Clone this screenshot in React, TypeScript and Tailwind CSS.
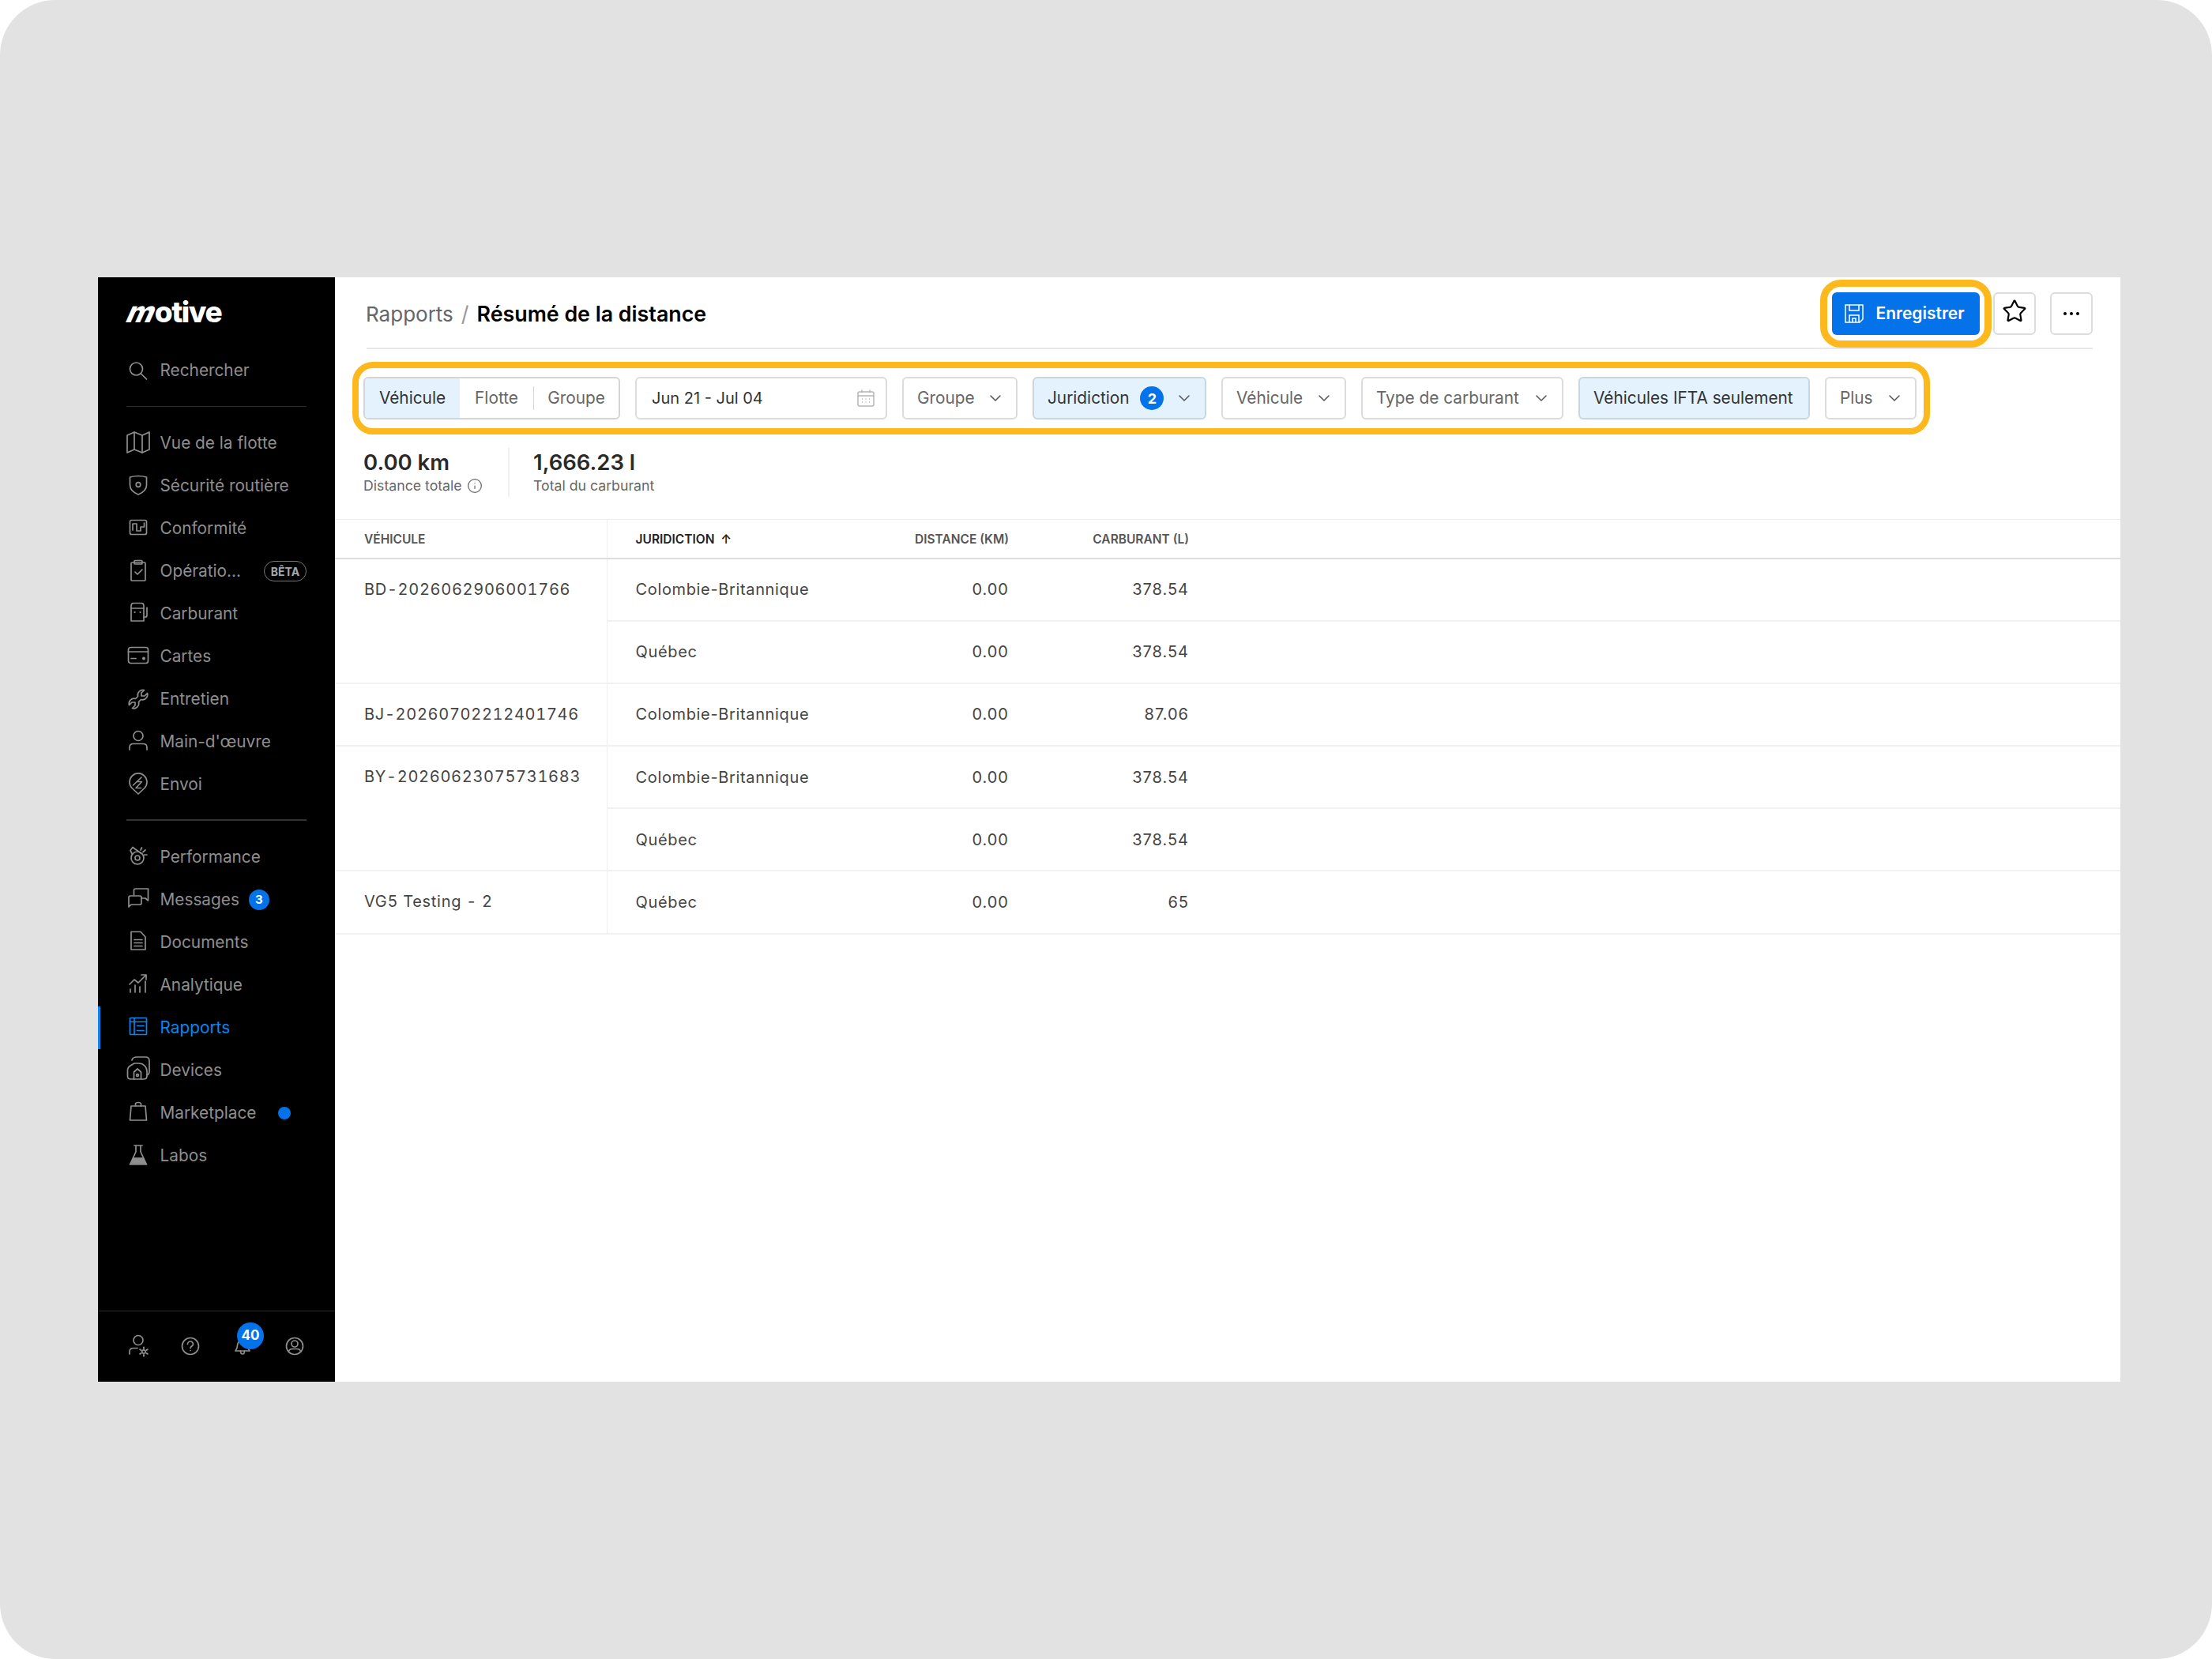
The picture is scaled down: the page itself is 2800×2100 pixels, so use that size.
import { ChevronDown, Info, Star } from 'lucide-react';
import type { ReactNode } from 'react';

function Ic({ children }: { children: ReactNode }) {
  return (
    <svg width="30" height="30" viewBox="0 0 30 30" fill="none" stroke="currentColor" strokeWidth="1.7" strokeLinecap="round" strokeLinejoin="round" className="shrink-0 overflow-visible">
      {children}
    </svg>
  );
}

const icons: Record<string, ReactNode> = {
  search: <><circle cx="12.5" cy="13" r="8" /><path d="M18.5 19 25.5 26" /></>,
  map: <><path d="M1 5 10 1 20 5 29 1V23L20 27 10 23 1 27Z" /><path d="M10 1V23M20 5V27" /></>,
  shield: <><path d="M4.5 4Q15 1 25.5 4V14C25.5 20 20 24 15 26 10 24 4.5 20 4.5 14Z" /><circle cx="15" cy="13.5" r="2.8" /></>,
  compliance: <><rect x="4.5" y="4.5" width="21" height="18" rx="2" /><path d="M8 17V9H13V18H18V13H22.5V8" /></>,
  clipboard: <><rect x="6" y="4" width="18" height="23" rx="1" /><rect x="10" y="1.5" width="10" height="4.5" rx="1" /><path d="M11 16 14 19 20 13" /></>,
  fuel: <><path d="M6 24V5Q6 1.5 9 1.5H19Q22 1.5 22 5V24Z" /><path d="M6 8H22M22 19H24Q26 19 26 17V7" /><path d="M10.5 13H10.6M17.5 13H17.6" strokeWidth="2.2" /></>,
  card: <><rect x="2.5" y="3.5" width="25" height="20" rx="3" /><path d="M2.5 9H27.5M6 17.5H12" /><circle cx="22" cy="17.5" r="2" fill="currentColor" stroke="none" /></>,
  wrench: <path d="M22.5 3.6 19 7V11H23L26.5 7.5A6.5 6.5 0 0 1 18.5 15.5L15.5 18.5A6.5 6.5 0 0 1 7.5 26.5L11 23V19H7L3.5 22.5A6.5 6.5 0 0 1 11.5 14.5L14.5 11.5A6.5 6.5 0 0 1 22.5 3.6Z" />,
  user: <><circle cx="15" cy="7.5" r="6" /><path d="M4 25V22Q4 17.5 9 17.5H21Q26 17.5 26 22V25" /></>,
  pin: <><path d="M15 27 7 19.5A11 11 0 1 1 23 19.5Z" /><path d="M8.5 16 19 6M13 11.5H19.5L12 19.5H18.5" /></>,
  perf: <><circle cx="14" cy="16" r="8" /><circle cx="14" cy="16" r="3" /><path d="M7.5 11.5 5 6.5 8 2.5 19 10.5M18 6 19.5 3M21 8.5 24 6M22.5 12H26" /></>,
  messages: <><path d="M3 24V12Q3 10 5 10H17Q19 10 19 12V19Q19 21 17 21H6Z" /><path d="M9.5 9V3Q9.5 1 11.5 1H27.5V16L24 13H19" /></>,
  docs: <><path d="M6 1.5H18L24 8V24H6Z" /><path d="M10 11.5H20M10 15.5H20M10 19.5H20" /></>,
  analytics: <><path d="M4 14 10 8 15 12 25 2M19 2H25V8M5 20V24M11 15V24M17 17V24M24 10V24" /></>,
  reports: <><rect x="4.5" y="2.5" width="21" height="21" rx="1" /><path d="M4.5 7.5H25.5M10 2.5V23.5M13.5 12.5H22M13.5 18.5H22" /></>,
  devices: <><path d="M7 2Q8 -2 13 -2H24Q29 -2 29 3V16Q29 20 26 21" /><path d="M1.5 22V15Q1.5 11 5 9L10 6H16Q20 6 23 9 26 12 26 16V22Q26 26 22 26H5.5Q1.5 26 1.5 22Z" /><path d="M9.5 26V17L14 13 18.5 17V26" /><circle cx="14" cy="21" r="1.4" /></>,
  market: <><path d="M6 6H24L25.5 24H4.5Z" /><path d="M11.5 6V3.5Q11.5 1.5 15 1.5 18.5 1.5 18.5 3.5V6" /></>,
  lab: <><path d="M10 2H20M12 2V10L4.5 26H25.5L18 10V2" /><path d="M9 18H21L24 25H6Z" fill="currentColor" /></>,
  userCog: <><circle cx="15" cy="7.5" r="6" /><path d="M4 25V22Q4 17.5 9 17.5H14" /><circle cx="22" cy="22" r="2.2" /><path d="M22 16.5V18M22 26V27.5M17.2 19.2 18.5 20M25.5 24 26.8 24.8M17.2 24.8 18.5 24M25.5 20 26.8 19.2" strokeWidth="2" /></>,
  help: <><circle cx="15" cy="15" r="10.5" /><path d="M11.5 12.5A3.5 3.5 0 0 1 18.5 12.5C18.5 15 15 15 15 17.5M15 20.5H15.1" /></>,
  bell: <><path d="M6 21Q8.5 18 8.5 14A6.5 6.5 0 0 1 21.5 14Q21.5 18 24 21Z" /><path d="M12.5 21Q12.5 25 15 25 17.5 25 17.5 21" /></>,
  account: <><circle cx="15" cy="15" r="10.5" /><circle cx="15" cy="12" r="4" /><path d="M7.5 22Q8 18.5 12 18.5H18Q22 18.5 22.5 22" /></>,
};

type NavEntry = { icon: string; label: string; extra?: ReactNode; active?: boolean };

const topNav: NavEntry[] = [
  { icon: 'map', label: 'Vue de la flotte' },
  { icon: 'shield', label: 'Sécurité routière' },
  { icon: 'compliance', label: 'Conformité' },
  {
    icon: 'clipboard',
    label: 'Opératio...',
    extra: (
      <span className="ml-auto mr-[36px] flex h-[26px] w-[54px] items-center justify-center rounded-full border border-[#777777] text-[14px] font-bold text-[#a8a8a8]">
        BÊTA
      </span>
    ),
  },
  { icon: 'fuel', label: 'Carburant' },
  { icon: 'card', label: 'Cartes' },
  { icon: 'wrench', label: 'Entretien' },
  { icon: 'user', label: "Main-d'œuvre" },
  { icon: 'pin', label: 'Envoi' },
];

const bottomNav: NavEntry[] = [
  { icon: 'perf', label: 'Performance' },
  {
    icon: 'messages',
    label: 'Messages',
    extra: (
      <span className="ml-[12px] flex h-[26px] w-[26px] items-center justify-center rounded-full bg-[#0473e9] text-[15px] font-bold text-white">
        3
      </span>
    ),
  },
  { icon: 'docs', label: 'Documents' },
  { icon: 'analytics', label: 'Analytique' },
  { icon: 'reports', label: 'Rapports', active: true },
  { icon: 'devices', label: 'Devices' },
  {
    icon: 'market',
    label: 'Marketplace',
    extra: <span className="ml-auto mr-[56px] h-[16px] w-[16px] rounded-full bg-[#0473e9]" />,
  },
  { icon: 'lab', label: 'Labos' },
];

function NavRow({ icon, label, extra, active }: NavEntry) {
  return (
    <div className={active ? 'flex h-[54px] items-center border-l-[3px] border-[#0a84f0] pl-[33px] text-[#0a84f0]' : 'flex h-[54px] items-center pl-[36px] text-[#8f8f8f]'}>
      <Ic>{icons[icon]}</Ic>
      <span className="ml-[12.5px] text-[20.8px] whitespace-nowrap">{label}</span>
      {extra}
    </div>
  );
}

function Sidebar() {
  return (
    <aside className="flex h-full w-[300px] shrink-0 flex-col bg-black">
      <div className="flex h-[86px] items-center pl-[39px] text-[37px] leading-none font-extrabold tracking-[-1.5px] text-white">
        <span className="inline-block -skew-x-[24deg]">m</span>
        <span>otive</span>
      </div>
      <div className="mt-[5px]">
        <NavRow icon="search" label="Rechercher" />
      </div>
      <div className="mx-[36px] mt-[18px] mb-[19px] h-[1px] bg-[#2a2a2a]" />
      {topNav.map((n) => (
        <NavRow key={n.label} {...n} />
      ))}
      <div className="mx-[36px] mt-[17px] mb-[19px] h-[2px] bg-[#333333]" />
      {bottomNav.map((n) => (
        <NavRow key={n.label} {...n} />
      ))}
      <div className="mt-auto flex h-[90px] items-center gap-[36px] border-t border-[#2a2a2a] pb-[2px] pl-[36px] text-[#8f8f8f]">
        <Ic>{icons.userCog}</Ic>
        <Ic>{icons.help}</Ic>
        <div className="relative h-[30px] w-[30px]">
          <Ic>{icons.bell}</Ic>
          <span className="absolute -top-[15px] left-[8px] flex h-[34px] w-[34px] items-center justify-center rounded-full bg-[#0473e9] text-[17px] font-bold text-white">
            40
          </span>
        </div>
        <Ic>{icons.account}</Ic>
      </div>
    </aside>
  );
}

function Pill({ w, active, children }: { w: string; active?: boolean; children: ReactNode }) {
  return (
    <div className={`flex h-[54px] ${w} shrink-0 items-center justify-between rounded-[6px] border-2 pr-[14px] pl-[17px] text-[20.8px] whitespace-nowrap ${active ? 'border-[#c9d6e2] bg-[#e3f2fd] text-[#333333]' : 'border-[#dcdcdc] bg-white text-[#666666]'}`}>
      {children}
    </div>
  );
}

function Chevron() {
  return <ChevronDown size={24} strokeWidth={1.5} className="shrink-0 text-[#555555]" />;
}

function FilterBar() {
  return (
    <div className="mt-[16px] ml-[22px] flex h-[92px] w-[1997px] items-center gap-[19px] rounded-[26px] border-[8px] border-[#fdb81e] pl-[6px]">
      <div className="flex h-[54px] w-[325px] shrink-0 overflow-hidden rounded-[6px] border-2 border-[#d5d5d5] text-[20.8px] text-[#666666]">
        <div className="flex w-[120px] items-center justify-center bg-[#e3f2fd] text-[#333333]">Véhicule</div>
        <div className="flex w-[93px] items-center justify-center">Flotte</div>
        <div className="my-auto h-[30px] w-[1px] bg-[#d5d5d5]" />
        <div className="flex flex-1 items-center justify-center">Groupe</div>
      </div>
      <Pill w="w-[319px]">
        <span className="pl-[2px] text-[20px] text-[#333333]">Jun 21 - Jul 04</span>
        <svg width="22" height="22" viewBox="0 0 22 22" fill="none" stroke="#b5b5b5" strokeWidth="1.5">
          <rect x="1" y="3" width="20" height="18" rx="2" />
          <path d="M1 8H21M6 0.5V4M16 0.5V4" />
          <path d="M6 12H7M10.5 12H11.5M15 12H16M6 16H7M10.5 16H11.5M15 16H16" />
        </svg>
      </Pill>
      <Pill w="w-[146px]">Groupe<Chevron /></Pill>
      <Pill w="w-[220px]" active>
        <span>Juridiction</span>
        <span className="flex h-[30px] w-[30px] items-center justify-center rounded-full bg-[#0473e9] text-[18px] font-bold text-white">2</span>
        <Chevron />
      </Pill>
      <Pill w="w-[158px]">Véhicule<Chevron /></Pill>
      <Pill w="w-[256px]">Type de carburant<Chevron /></Pill>
      <Pill w="w-[293px]" active>Véhicules IFTA seulement</Pill>
      <Pill w="w-[116px]">Plus<Chevron /></Pill>
    </div>
  );
}

const rows = [
  { vehicle: 'BD-2026062906001766', items: [['Colombie-Britannique', '0.00', '378.54'], ['Québec', '0.00', '378.54']] },
  { vehicle: 'BJ-20260702212401746', items: [['Colombie-Britannique', '0.00', '87.06']] },
  { vehicle: 'BY-20260623075731683', items: [['Colombie-Britannique', '0.00', '378.54'], ['Québec', '0.00', '378.54']] },
  { vehicle: 'VG5 Testing - 2', items: [['Québec', '0.00', '65']] },
];

function DataTable() {
  return (
    <table className="w-full table-fixed border-collapse text-[20px] text-[#444444]">
      <colgroup>
        <col className="w-[344px]" />
        <col className="w-[330px]" />
        <col className="w-[179px]" />
        <col className="w-[228px]" />
        <col />
      </colgroup>
      <thead>
        <tr className="h-[49px] border-t border-b-2 border-t-[#eeeeee] border-b-[#dddddd] text-[15.5px] font-semibold text-[#555555]">
          <th className="border-r border-[#eeeeee] pt-[1px] pl-[37px] text-left font-semibold">VÉHICULE</th>
          <th className="pt-[1px] pl-[36px] text-left font-semibold text-[#222222]">JURIDICTION <span className="ml-[4px]">↑</span></th>
          <th className="pt-[1px] text-right font-semibold">DISTANCE (KM)</th>
          <th className="pt-[1px] text-right font-semibold">CARBURANT (L)</th>
          <th />
        </tr>
      </thead>
      <tbody>
        {rows.map((r) =>
          r.items.map((it, i) => (
            <tr key={r.vehicle + it[0]} className="h-[79.2px] border-b-2 border-[#f1f1f1]">
              {i === 0 && (
                <td rowSpan={r.items.length} className="border-r border-[#eeeeee] pt-[23px] pl-[37px] align-top tracking-[0.7px] whitespace-nowrap tabular-nums">
                  {r.vehicle}
                </td>
              )}
              <td className="pl-[36px] tracking-[0.65px]">{it[0]}</td>
              <td className="text-right tracking-[1px]">{it[1]}</td>
              <td className="text-right tracking-[1px]">{it[2]}</td>
              <td />
            </tr>
          )),
        )}
      </tbody>
    </table>
  );
}

export default function App() {
  return (
    <div className="h-[2100px] w-[2800px] bg-white font-[Inter,sans-serif]">
      <div className="h-[2100px] w-[2800px] rounded-[70px] bg-[#e2e2e2] pt-[351px] pl-[124px]">
        <div className="flex h-[1398px] w-[2560px] bg-white">
          <Sidebar />
          <main className="flex flex-1 flex-col">
            <header className="mr-[35px] ml-[40px] flex h-[91px] items-center justify-between border-b-2 border-[#e8e8e8] pt-[2px]">
              <div className="-ml-[1px] flex items-baseline pt-[2px] text-[27px]">
                <span className="text-[26px] text-[#666666]">Rapports</span>
                <span className="mx-[10px] text-[#999999]">/</span>
                <span className="text-[26.8px] font-semibold text-black">Résumé de la distance</span>
              </div>
              <div className="flex items-center">
                <div className="rounded-[26px] border-[9px] border-[#fdb81e] px-[6px] py-[7px]">
                  <button className="flex h-[54px] w-[187px] items-center justify-center gap-[15px] rounded-[6px] bg-[#0473e9] pr-[3px] text-[21px] font-semibold text-white">
                    <svg width="24" height="24" viewBox="0 0 24 24" fill="none" stroke="currentColor" strokeWidth="1.5">
                      <path d="M1 1H23V19L19 23H1Z" />
                      <path d="M6 1V8H18V1M6 23V14H18V23M10 23V18H14V23" />
                    </svg>
                    Enregistrer
                  </button>
                </div>
                <button className="ml-[2px] flex h-[54px] w-[54px] items-center justify-center rounded-[6px] border-2 border-[#dcdcdc]">
                  <Star size={32} strokeWidth={1.6} className="-mt-[5px] text-black" />
                </button>
                <button className="ml-[18px] flex h-[54px] w-[54px] items-center justify-center gap-[4px] rounded-[6px] border-2 border-[#dcdcdc]">
                  <span className="h-[4px] w-[4px] rounded-full bg-black" />
                  <span className="h-[4px] w-[4px] rounded-full bg-black" />
                  <span className="h-[4px] w-[4px] rounded-full bg-black" />
                </button>
              </div>
            </header>
            <FilterBar />
            <div className="mt-[17px] ml-[36px] flex h-[62px]">
              <div className="w-[185px] border-r-2 border-[#f0f0f0]">
                <div className="text-[27.5px] leading-[36px] font-semibold text-[#2a2a2a]">0.00 km</div>
                <div className="flex items-center gap-[6px] text-[17.7px] leading-[24px] text-[#666666]">
                  Distance totale <Info size={20} strokeWidth={1.5} />
                </div>
              </div>
              <div className="pl-[30px]">
                <div className="text-[27.5px] leading-[36px] font-semibold text-[#2a2a2a]">1,666.23 l</div>
                <div className="text-[17.7px] leading-[24px] text-[#666666]">Total du carburant</div>
              </div>
            </div>
            <div className="mt-[28px]">
              <DataTable />
            </div>
          </main>
        </div>
      </div>
    </div>
  );
}
